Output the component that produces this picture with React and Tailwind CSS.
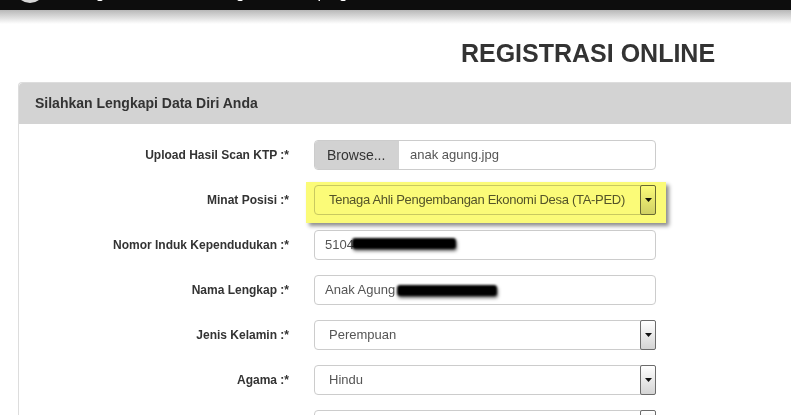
import React from 'react'

function Arrow() {
    return (
        <div className="-my-px -mr-px flex w-[16px] items-center justify-center rounded-[2px] border border-[#6b6b6b] bg-gradient-to-b from-white to-[#d4d4d4]">
            <svg width="7" height="4" viewBox="0 0 7 4">
                <path d="M0 0h7L3.5 4z" fill="#111" />
            </svg>
        </div>
    )
}

function Select({ value, tight }) {
    return (
        <div className="flex h-[30px] w-[342px] items-stretch rounded-[4px] border border-[#cccccc] bg-white">
            <div className={tight ? 'flex flex-1 items-center pl-[14px] text-[13px] tracking-[-0.3px] text-[#555]' : 'flex flex-1 items-center pl-[14px] text-[13px] text-[#555]'}>
                {value}
            </div>
            <Arrow />
        </div>
    )
}

function TextInput({ children }) {
    return (
        <div className="flex h-[30px] w-[342px] items-center rounded-[4px] border border-[#cccccc] bg-white pl-[10px] text-[13px] text-[#555]">
            {children}
        </div>
    )
}

function Redacted({ width }) {
    return (
        <span
            className="inline-block h-[11px] rounded-[3px] bg-black blur-[1.2px] shadow-[1px_2px_3px_rgba(0,0,0,0.6)]"
            style={{ width }}
        />
    )
}

function Row({ label, children }) {
    return (
        <div className="flex items-center">
            <div className="w-[270px] text-right text-[12px] font-bold text-[#333]">{label}</div>
            <div className="ml-[25px]">{children}</div>
        </div>
    )
}

export default function App() {
    return (
        <div className="h-screen w-screen overflow-hidden bg-white font-['Liberation_Sans',Arial,sans-serif]">
            {/* top bar */}
            <div className="h-[10px] overflow-hidden bg-[#0d0d0d]">
                <div className="-mt-[27px] flex items-start pl-[15px]">
                    <div className="h-[30px] w-[30px] shrink-0 rounded-full bg-[#d6d6d6]" />
                    <span className="ml-[30px] mt-[11px] text-[16px] leading-[18px] whitespace-nowrap text-white">
                        Registrasi Online Tenaga Pendamping Profesional Desa
                    </span>
                </div>
            </div>
            <div className="h-[14px] bg-gradient-to-b from-[#b8b8b8] to-white" />

            <div className="ml-[18px] w-[1140px]">
                <h1 className="mt-[14px] text-center text-[25px] leading-[30px] font-bold text-[#333]">
                    REGISTRASI ONLINE
                </h1>

                <div className="mt-[14px] rounded-tl-[4px] border-l border-t border-[#dddddd]">
                    <div className="flex h-[41px] items-center rounded-tl-[4px] bg-[#d3d3d3] pl-[16px] text-[14px] font-bold text-[#333]">
                        Silahkan Lengkapi Data Diri Anda
                    </div>

                    <div className="flex flex-col gap-[15px] pt-[16px]">
                        <Row label="Upload Hasil Scan KTP :*">
                            <div className="flex h-[30px] w-[342px] items-stretch rounded-[4px] border border-[#cccccc] bg-white">
                                <div className="flex w-[84px] items-center rounded-l-[3px] bg-[#d2d2d2] pl-[12px] text-[14px] text-[#333]">
                                    Browse...
                                </div>
                                <div className="flex items-center pl-[11px] text-[13px] text-[#555]">anak agung.jpg</div>
                            </div>
                        </Row>

                        <Row label="Minat Posisi :*">
                            <div className="relative">
                                <Select value="Tenaga Ahli Pengembangan Ekonomi Desa (TA-PED)" tight />
                                <div className="pointer-events-none absolute -top-[3px] -left-[8px] h-[41px] w-[360px] bg-[#fbfb78] mix-blend-multiply shadow-[3px_3px_4px_rgba(0,0,0,0.45)]" />
                            </div>
                        </Row>

                        <Row label="Nomor Induk Kependudukan :*">
                            <TextInput>
                                <span>5104</span>
                                <span className="-ml-[2px]">
                                    <Redacted width="104px" />
                                </span>
                            </TextInput>
                        </Row>

                        <Row label="Nama Lengkap :*">
                            <TextInput>
                                <span className="mr-[2px]">Anak Agung</span>
                                <Redacted width="100px" />
                            </TextInput>
                        </Row>

                        <Row label="Jenis Kelamin :*">
                            <Select value="Perempuan" />
                        </Row>

                        <Row label="Agama :*">
                            <Select value="Hindu" />
                        </Row>

                        <Row label="">
                            <Select value="" />
                        </Row>
                    </div>
                </div>
            </div>
        </div>
    )
}
